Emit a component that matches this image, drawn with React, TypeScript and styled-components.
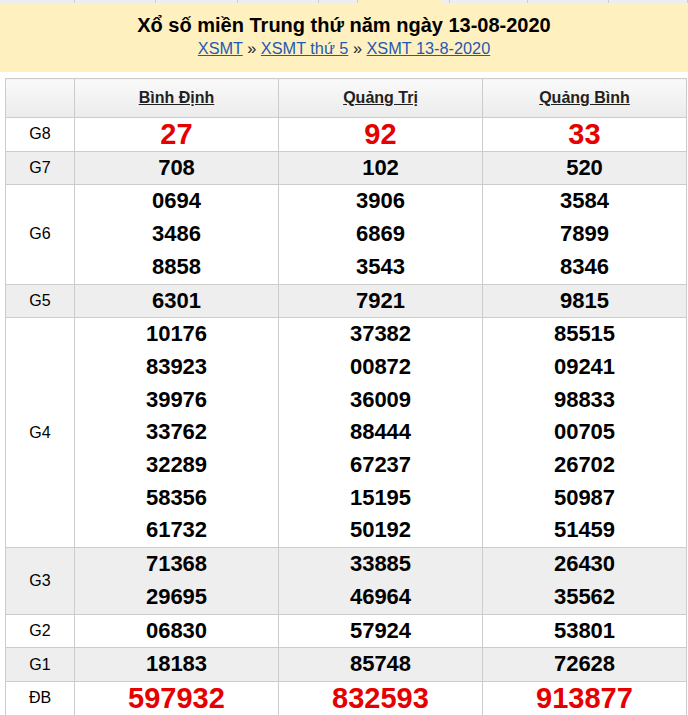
import { createGlobalStyle } from 'styled-components';
import styled from 'styled-components';

const GlobalStyle = createGlobalStyle`
  html, body {
    margin: 0;
    padding: 0;
    background: #fff;
    font-family: 'Liberation Sans', Arial, sans-serif;
    overflow: hidden;
  }
`;

interface PrizeRow {
  label: string;
  values: string[][];
  kind?: 'big' | 'normal';
}

const provinces = ['Bình Định', 'Quảng Trị', 'Quảng Bình'];

// menu strip segments above the banner (only the edge of it shows)
const strip = [
  { w: 75 },
  { w: 81 },
  { w: 82 },
  { w: 81 },
  { w: 39 },
  { w: 84, active: true },
  { w: 8 },
  { w: 78 },
  { w: 81 },
  { w: 79 },
];

const rows: PrizeRow[] = [
  { label: 'G8', values: [['27'], ['92'], ['33']], kind: 'big' },
  { label: 'G7', values: [['708'], ['102'], ['520']] },
  {
    label: 'G6',
    values: [
      ['0694', '3486', '8858'],
      ['3906', '6869', '3543'],
      ['3584', '7899', '8346'],
    ],
  },
  { label: 'G5', values: [['6301'], ['7921'], ['9815']] },
  {
    label: 'G4',
    values: [
      ['10176', '83923', '39976', '33762', '32289', '58356', '61732'],
      ['37382', '00872', '36009', '88444', '67237', '15195', '50192'],
      ['85515', '09241', '98833', '00705', '26702', '50987', '51459'],
    ],
  },
  {
    label: 'G3',
    values: [
      ['71368', '29695'],
      ['33885', '46964'],
      ['26430', '35562'],
    ],
  },
  { label: 'G2', values: [['06830'], ['57924'], ['53801']] },
  { label: 'G1', values: [['18183'], ['85748'], ['72628']] },
  { label: 'ĐB', values: [['597932'], ['832593'], ['913877']], kind: 'big' },
];

const Page = styled.div`
  width: 688px;
`;

const TopStrip = styled.div`
  display: flex;
  height: 3px;
  background: #eeeeee;
`;

const StripItem = styled.div<{ $active?: boolean }>`
  flex-shrink: 0;
  box-sizing: border-box;
  background: ${(p) => (p.$active ? '#fff1bf' : '#eeeeee')};
  border-right: 1px solid ${(p) => (p.$active ? '#fff1bf' : '#cfcfcf')};
`;

const Banner = styled.div`
  background: #fff1bf;
  height: 69px;
  display: flex;
  flex-direction: column;
  align-items: center;
  padding-top: 10px;
  box-sizing: border-box;
`;

const Title = styled.h1`
  margin: 0;
  font-size: 20px;
  line-height: 24px;
  font-weight: bold;
  color: #000;
`;

const Crumbs = styled.div`
  font-size: 16.3px;
  line-height: 20px;
  color: #222;
  margin-top: 1px;
`;

const Crumb = styled.a`
  color: #1f59b3;
  text-decoration: underline;
`;

const Table = styled.table`
  margin: 6px 0 0 5px;
  width: 681px;
  border-collapse: collapse;
  table-layout: fixed;
`;

const HeadCell = styled.th`
  height: 38px;
  padding: 0;
  border: 1px solid #cccccc;
  background: linear-gradient(#fafafa, #ebebeb);
  text-align: center;
  vertical-align: middle;
`;

const ProvinceLink = styled.a`
  font-size: 16px;
  font-weight: bold;
  color: #222;
  text-decoration: underline;
`;

const Row = styled.tr<{ $shaded: boolean }>`
  background: ${(p) => (p.$shaded ? '#eeeeee' : '#ffffff')};
`;

const LabelCell = styled.td`
  padding: 0;
  border: 1px solid #cccccc;
  text-align: center;
  vertical-align: middle;
  font-size: 16px;
  color: #000;
`;

const ValueCell = styled.td`
  padding: 0;
  border: 1px solid #cccccc;
  text-align: center;
  vertical-align: middle;
`;

const Num = styled.div<{ $big?: boolean }>`
  line-height: 32.7px;
  font-size: ${(p) => (p.$big ? '29px' : '22px')};
  font-weight: bold;
  color: ${(p) => (p.$big ? '#e60000' : '#000')};
`;

export default function App() {
  return (
    <Page>
      <GlobalStyle />
      <TopStrip>
        {strip.map((s, i) => (
          <StripItem key={i} $active={s.active} style={{ width: s.w }} />
        ))}
      </TopStrip>
      <Banner>
        <Title>Xổ số miền Trung thứ năm ngày 13-08-2020</Title>
        <Crumbs>
          <Crumb href="#">XSMT</Crumb> » <Crumb href="#">XSMT thứ 5</Crumb> »{' '}
          <Crumb href="#">XSMT 13-8-2020</Crumb>
        </Crumbs>
      </Banner>
      <Table>
        <colgroup>
          <col style={{ width: 69 }} />
          <col style={{ width: 204 }} />
          <col style={{ width: 204 }} />
          <col style={{ width: 204 }} />
        </colgroup>
        <thead>
          <tr>
            <HeadCell />
            {provinces.map((p) => (
              <HeadCell key={p}>
                <ProvinceLink href="#">{p}</ProvinceLink>
              </HeadCell>
            ))}
          </tr>
        </thead>
        <tbody>
          {rows.map((row, i) => (
            <Row key={row.label} $shaded={i % 2 === 1}>
              <LabelCell>{row.label}</LabelCell>
              {row.values.map((col, j) => (
                <ValueCell key={j}>
                  {col.map((n) => (
                    <Num key={n} $big={row.kind === 'big'}>
                      {n}
                    </Num>
                  ))}
                </ValueCell>
              ))}
            </Row>
          ))}
        </tbody>
      </Table>
    </Page>
  );
}
